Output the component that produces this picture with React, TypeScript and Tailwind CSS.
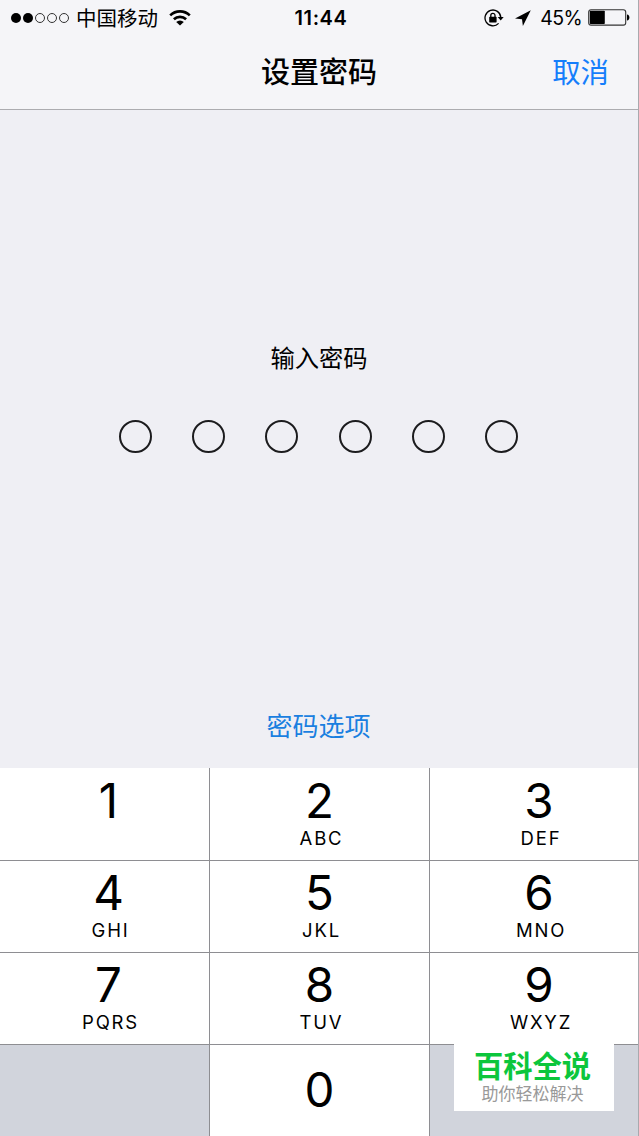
const SIGNAL = [true, true, false, false, false]

const KEYS = [
  { digit: '1', letters: '' },
  { digit: '2', letters: 'ABC' },
  { digit: '3', letters: 'DEF' },
  { digit: '4', letters: 'GHI' },
  { digit: '5', letters: 'JKL' },
  { digit: '6', letters: 'MNO' },
  { digit: '7', letters: 'PQRS' },
  { digit: '8', letters: 'TUV' },
  { digit: '9', letters: 'WXYZ' },
]

// outer columns sit slightly right of centre
const COLUMN_PAD = ['pl-[8px]', '', 'pl-[10px]']

function WifiIcon() {
  return (
    <svg width="22" height="16" viewBox="0 0 22 16" fill="none" stroke="#000" strokeWidth="2.6">
      <path d="M1.2 5.4a14 14 0 0 1 19.6 0" />
      <path d="M4.9 9.3a8.8 8.8 0 0 1 12.2 0" />
      <path d="M11 15.6 7.2 12.1a5.2 5.2 0 0 1 7.6 0z" fill="#000" stroke="none" />
    </svg>
  )
}

function RotationLockIcon() {
  return (
    <svg width="20" height="18" viewBox="0 0 20 18" fill="none" stroke="#000" strokeWidth="1.3">
      <path d="M14.6 14.4A7.9 7.9 0 1 1 16.8 8.4" />
      <path d="M13.7 8h6l-3 3.6z" fill="#000" stroke="none" />
      <rect x="5.2" y="7.8" width="7.4" height="5.6" rx="0.6" fill="#000" stroke="none" />
      <path d="M6.8 8.4V6.4a2.1 2.1 0 0 1 4.2 0v2" />
    </svg>
  )
}

function LocationIcon() {
  return (
    <svg width="16" height="16" viewBox="0 0 16 16">
      <path d="M15.8.2 0 8.4l7 .9.9 6.7z" />
    </svg>
  )
}

function BatteryIcon() {
  return (
    <svg width="42" height="17" viewBox="0 0 42 17">
      <rect x="0.7" y="0.7" width="37" height="15.4" rx="2.4" fill="none" stroke="#333" strokeWidth="1.1" />
      <rect x="1.8" y="1.8" width="15" height="13.2" rx="0.8" />
      <path d="M39 5.4c1.7.3 2.4 1.4 2.4 3s-.7 2.7-2.4 3z" />
    </svg>
  )
}

function StatusBar() {
  return (
    <div className="grid h-9 grid-cols-[1fr_auto_1fr] items-center text-black">
      <div className="flex items-center pl-[11px]">
        <div className="flex gap-[2px]">
          {SIGNAL.map((on, i) => (
            <span key={i} className={on ? 'size-[10px] rounded-full bg-black' : 'size-[10px] rounded-full border border-[#333]'} />
          ))}
        </div>
        <span className="ml-[7px] mt-px text-[20.5px] leading-6">中国移动</span>
        <span className="ml-[11px] -mt-px"><WifiIcon /></span>
      </div>
      <span className="pl-[4px] text-[20px] font-semibold leading-6 tracking-[0.6px]">11:44</span>
      <div className="flex items-center justify-end pr-[8px]">
        <RotationLockIcon />
        <span className="ml-[11px] -mt-px"><LocationIcon /></span>
        <span className="ml-[9px] text-[19.5px] leading-6 tracking-[-0.6px]">45%</span>
        <span className="ml-[6px] -mt-px"><BatteryIcon /></span>
      </div>
    </div>
  )
}

function NavBar() {
  return (
    <div className="grid h-[73px] grid-cols-[1fr_auto_1fr] items-center">
      <span />
      <h1 className="text-[29px] font-medium leading-10 text-black">设置密码</h1>
      <button className="justify-self-end pr-[29px] text-[28.4px] leading-10 text-[#157efb]">取消</button>
    </div>
  )
}

function Key({ digit, letters, index }: { digit: string; letters: string; index: number }) {
  return (
    <button className={`flex flex-col items-center bg-white text-black ${index < 3 ? 'pt-[7px]' : 'pt-[6px]'} ${COLUMN_PAD[index % 3]}`}>
      <span className="text-[47.5px] leading-[52px]">{digit}</span>
      {letters && <span className="pl-[4px] text-[18.5px] leading-[22px] tracking-[1.8px]">{letters}</span>}
    </button>
  )
}

function Keypad() {
  return (
    <div className="grid h-[368px] grid-cols-[209px_219px_208px] grid-rows-[92px_91px_91px_91px] gap-px bg-[#8e8e92]">
      {KEYS.map((k, i) => <Key key={k.digit} index={i} {...k} />)}
      <div className="bg-[#d1d4dc]" />
      <button className="flex items-center justify-center bg-white pb-px text-[47.5px] leading-[52px] text-black">0</button>
      <div className="relative bg-[#d1d4dc]">
        <div className="absolute -top-[3px] left-[24px] flex h-[69px] w-[160px] flex-col items-center bg-white pt-[7px] pr-[3px]">
          <span className="text-[29.3px] font-bold leading-[35px] text-[#0bc63c]">百科全说</span>
          <span className="text-[17px] leading-[20px] text-[#999]">助你轻松解决</span>
        </div>
      </div>
    </div>
  )
}

export default function App() {
  return (
    <div className="flex h-[1136px] w-[639px] flex-col border-r border-[#a9a9ae] bg-[#efeff4] font-['Inter','Noto_Sans_CJK_SC',sans-serif]">
      <header className="border-b border-[#acacb0] bg-[#f5f5f8]">
        <StatusBar />
        <NavBar />
      </header>
      <main className="flex flex-1 flex-col items-center">
        <p className="mt-[230px] text-[24.3px] leading-9 text-black">输入密码</p>
        <div className="mt-[44px] flex gap-[40.2px] pr-px">
          {[0, 1, 2, 3, 4, 5].map((i) => (
            <span key={i} className="size-[33px] rounded-full border-2 border-[#1c1c1e]" />
          ))}
        </div>
        <button className="mt-auto mb-[21px] pr-px text-[26px] leading-10 text-[#1a7fe0]">密码选项</button>
      </main>
      <Keypad />
    </div>
  )
}
